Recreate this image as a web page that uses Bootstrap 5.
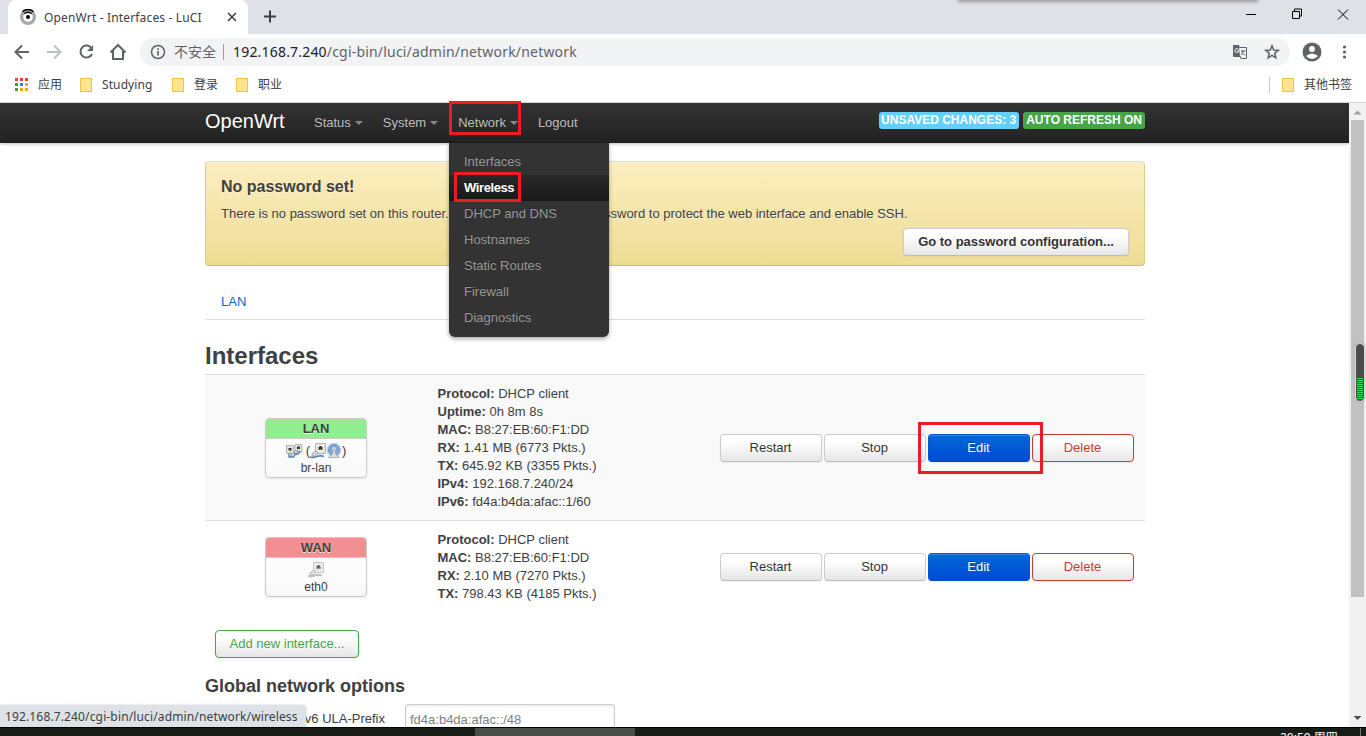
<!DOCTYPE html>
<html lang="zh">
<head>
<meta charset="utf-8">
<title>OpenWrt - Interfaces - LuCI</title>
<link href="https://cdn.jsdelivr.net/npm/bootstrap@5.3.0/dist/css/bootstrap.min.css" rel="stylesheet">
<script src="https://cdn.jsdelivr.net/npm/bootstrap@5.3.0/dist/js/bootstrap.bundle.min.js"></script>
<style>
html,body{height:736px;overflow:hidden}
body{font:13px/18px "Liberation Sans",sans-serif;color:#404040;background:#fff}
svg{display:block;flex:none}
.chrome{font-family:"Noto Sans","Noto Sans CJK SC",sans-serif;color:#3c4043}
.strip{height:34px;background:#dee1e6}
.tab{width:240px;height:34px;margin-left:8px;border-radius:8px 8px 0 0;background:#fff;padding:0 11px 0 12px;font-size:12px}
.tab-title{width:162px;margin-left:8px;letter-spacing:.16px;padding-top:1px}
.topshade{left:958px;top:-4px;width:300px;height:5px;border-radius:2px;background:#aaa;box-shadow:0 0 4px #777}
.toolbar{height:35px;padding-left:14px}
.omni{width:1150px;height:28px;border-radius:14px;background:#f1f3f4;padding:0 10px 0 10px;font-size:14px;color:#5f6368}
.omni b{font-weight:400;color:#202124}
.url{letter-spacing:.19px}
.sep{width:1px;height:16px;background:#9aa0a6}
.marks{height:33px;font-size:12px;padding:0 14px 2px 15px}
.fold{width:12px;height:14px;background:#ffe38f;border:1px solid #e9c643}
.view{height:625px;border-top:1px solid #d4d4d4;overflow:hidden}
.main{width:1349px}
.wrap{width:940px;margin:0 0 0 205px}
.topnav{height:40px;background:linear-gradient(#333,#222);box-shadow:0 1px 3px rgba(0,0,0,.25),inset 0 -1px 0 rgba(0,0,0,.1);text-shadow:0 -1px 0 rgba(0,0,0,.25)}
.brandname{font-size:20px;color:#fff;width:99px;line-height:36px}
.topnav .nav-link{padding:0 10px;line-height:39px;color:#bfbfbf}
.tri:after{content:"";display:inline-block;border:4px solid transparent;border-top-color:#888;border-bottom:0;margin-left:4px;vertical-align:2px}
.menu{top:40px;left:244px;width:160px;height:194px;padding:6px 0;background:#333;border-radius:0 0 6px 6px;box-shadow:0 2px 4px rgba(0,0,0,.35);z-index:3;color:#999}
.menu div{height:26px;line-height:26px;padding-left:15px}
.menu .on{background:linear-gradient(#292929,#191919);color:#fff;font-weight:700;letter-spacing:-.4px}
.tag{height:17px;line-height:16px;border-radius:3px;color:#fff;font-size:12px;font-weight:700;padding:0 3px 0 2px;text-shadow:none}
.tag+.tag{padding:0 3px 0 3px}
.notice{margin-top:18px;height:105px;padding:7px 15px;background:linear-gradient(#fceec1,#eedc94);border:1px solid;border-color:#dfdbcd #dccb85 #bfb9a0;border-radius:4px;box-shadow:inset 0 1px 0 rgba(255,255,255,.25);text-shadow:0 1px 0 rgba(255,255,255,.5)}
.notice h4{font-size:16px;line-height:36px;font-weight:700;margin:0}
.lbtn{display:block;height:28px;border:1px solid #ccc;border-bottom-color:#bbb;border-radius:4px;background:linear-gradient(#fff 25%,#e6e6e6);font-size:13px;line-height:25px;color:#333;padding:0;text-align:center;box-shadow:inset 0 1px 0 rgba(255,255,255,.2),0 1px 2px rgba(0,0,0,.05);text-shadow:0 1px 1px rgba(255,255,255,.75)}
.w102{width:102px;padding-right:1px}
.lbtn.pri{background:linear-gradient(#0069d6,#0049d6);border-color:#0057d6 #0057d6 #0049c0;color:#fff;text-shadow:0 -1px 0 rgba(0,0,0,.25)}
.lbtn.neg{color:#c43c35;border-color:#c43c35}
.lbtn.pos{color:#46a546;border-color:#46a546;width:144px;margin:18px 0 0 10px}
.lantab{height:36px;margin-top:18px;border-bottom:1px solid #ddd;padding-left:16px;line-height:36px;color:#0069d6}
h2.ttl{font-size:24px;line-height:36px;font-weight:700;margin:18px 0 0}
.rowx{border-top:1px solid #ddd;padding:10px 11px 9px 0}
.odd{background:#f9f9f9}
.cellbox{width:222px}
.ifbox{width:102px;height:60px;border:1px solid #ccc;border-radius:4px;background:linear-gradient(#fff,#f9f9f9);box-shadow:0 1px 2px rgba(0,0,0,.08);text-align:center;overflow:hidden;font-size:12px}
.ifhead{height:20px;line-height:19px;border-bottom:1px solid #ccc;font-weight:700;font-size:13px;text-shadow:0 1px 0 rgba(255,255,255,.75)}
.dev{line-height:16px;padding-top:1px}
h3.sub{font-size:18px;line-height:36px;font-weight:700;margin:10px 0 0}
.inp{width:210px;height:28px;border:1px solid #ccc;border-radius:3px;color:#808080;padding:6px 4px;box-shadow:inset 0 1px 3px rgba(0,0,0,.1)}
.sbar{width:17px;height:624px;background:#f1f1f1}
.thumb{width:13px;height:477px;background:#c1c1c1}
.pill{left:1355px;top:343px;width:10px;height:59px;border-radius:5px;background:#4c4c4c;border:1px solid #ddd;box-shadow:0 0 2px #999}
.pill i{display:block;margin:34px 1px 0;height:22px;background:repeating-linear-gradient(#2fd65c 0 1px,#3c5c43 1px 2px)}
.red{border:3px solid #ed1c24;z-index:5}
.r1{left:449px;top:101px;width:72px;height:34px}
.r2{left:454px;top:172px;width:67px;height:30px}
.r3{left:918px;top:422px;width:125px;height:52px}
.bubble{left:0;top:705px;width:306px;height:22px;background:#dee1e6;border-radius:0 4px 0 0;padding-left:5px;line-height:24px;font-size:12px;letter-spacing:.14px;box-shadow:0 0 2px rgba(0,0,0,.25)}
.task{height:9px;background:#181d17;border-top:1px solid #000;overflow:hidden}
.task .act{margin-left:475px;width:160px;background:#484d47}
.clock{margin-left:645px;width:81px;color:#fff;font-size:12px;line-height:18px;border-right:1px solid #777;padding-top:1px}
</style>
</head>
<body>
<svg width="0" height="0" class="position-absolute"><defs>
<g id="plug"><path d="M5.500 .5h10v10h-10z" fill="#e9e9e4" stroke="#b4b4ae"/><path d="M8.500 4h1V3h2v1h1v3h-4z" fill="#333"/><path d="M9.500 6.500h2" stroke="#a6904c"/></g>
</defs></svg>
<div class="chrome">
 <div class="strip d-flex position-relative overflow-hidden">
  <div class="topshade position-absolute"></div>
  <div class="tab d-flex align-items-center">
   <svg width="16" height="16" viewBox="0 0 16 16"><circle cx="8" cy="8" r="8" fill="#a8a8a8"/><circle cx="8" cy="8" r="4.800" fill="#fff"/><circle cx="8" cy="8" r="2" fill="#000"/><path d="M2.500 2.800Q8-2 13.500 2.800M4.300 4.800Q8 1.500 11.700 4.800" fill="none" stroke="#000" stroke-width="1.400"/></svg>
   <span class="tab-title">OpenWrt - Interfaces - LuCI</span>
   <svg class="ms-auto" width="10" height="10"><path d="M1 1l8 8M9 1l-8 8" stroke="#3c4043" stroke-width="1.600"/></svg>
  </div>
  <svg class="ms-3 mt-1" width="13" height="25"><path d="M0 12.500h12M6 6.500v12" stroke="#3c4043" stroke-width="2"/></svg>
  <svg class="ms-auto" width="122" height="34" fill="none" stroke="#000"><path d="M2 14.500h10M48.500 11.500h7v7h-7zM50.500 11v-2h7v7h-2M94 9.500l10 10M104 9.500l-10 10"/></svg>
 </div>
 <div class="toolbar d-flex align-items-center">
  <svg width="126" height="20" fill="none" stroke="#5f6368" stroke-width="2"><path d="M15 10H2M8 3.500L1.500 10 8 16.500"/><path d="M33 10h13M40 3.500l6.500 6.500-6.500 6.500" stroke="#bdc1c6"/><path d="M77.500 6.200A6 6 0 1 0 78 12"/><path d="M79 3v6h-6z" fill="#5f6368" stroke="none"/><path d="M96.500 10.500l7.500-7.500 7.500 7.500M99 9v8h10V9"/></svg>
  <div class="omni d-flex align-items-center">
   <svg width="16" height="16" fill="none" stroke="#5f6368" stroke-width="1.500"><circle cx="8" cy="8" r="6.500"/><path d="M8 7v4.500M8 4.200v1.600" stroke-width="1.700"/></svg>
   <span style="margin-left:8px">不安全</span><i class="sep me-3" style="margin-left:7px;margin-right:9px!important"></i><span class="url"><b>192.168.7.240</b>/cgi-bin/luci/admin/network/network</span>
   <svg class="ms-auto" width="16" height="16"><path d="M1 1h6l2.500 12H2q-1 0-1-1z" fill="#5f6368"/><path d="M7 3.500h7.500v11H9L8 12" fill="#f1f3f4" stroke="#5f6368"/><path d="M6.500 5.500a2 2 0 1 0 .3 1.500H5" fill="none" stroke="#fff"/><path d="M9 7h4.500M11 6v1.500q0 2-2 3.500M10 8.500l3 3" fill="none" stroke="#5f6368"/></svg>
   <svg class="ms-3" width="16" height="16"><path d="M8 1.800l1.700 4.300 4.500.3-3.500 2.900 1.200 4.500L8 11.300l-3.900 2.500 1.200-4.500-3.500-2.900 4.500-.3z" fill="none" stroke="#5f6368" stroke-width="1.500"/></svg>
  </div>
  <svg width="76" height="20"><circle cx="22" cy="10" r="9.500" fill="#5f6368"/><circle cx="22" cy="7" r="2.900" fill="#fff"/><path d="M16 14q6-5 12 0-2.500 3-6 3t-6-3z" fill="#fff"/><g fill="#5f6368"><circle cx="54.500" cy="5" r="1.600"/><circle cx="54.500" cy="10" r="1.600"/><circle cx="54.500" cy="15" r="1.600"/></g></svg>
 </div>
 <div class="marks d-flex align-items-center">
  <svg width="13" height="13"><path d="M0 0h3v3H0zM5 0h3v3H5zM10 0h3v3h-3z" fill="#ea4335"/><path d="M0 5h3v3H0zM0 10h3v3H0z" fill="#34a050"/><path d="M5 5h3v3H5z" fill="#2684fc"/><path d="M10 5h3v3h-3zM5 10h3v3H5zM10 10h3v3h-3z" fill="#f5a800"/></svg>
  <span style="margin-left:10px;width:42px">应用</span>
  <i class="fold"></i><span style="margin-left:10px;width:70px;letter-spacing:.1px">Studying</span>
  <i class="fold"></i><span style="margin-left:10px;width:42px">登录</span>
  <i class="fold"></i><span style="margin-left:10px">职业</span>
  <i class="sep ms-auto" style="opacity:.6;margin-right:12px"></i><i class="fold"></i><span style="margin-left:10px">其他书签</span>
 </div>
</div>
<div class="view d-flex">
 <div class="main">
  <div class="topnav"><div class="wrap d-flex position-relative">
   <div class="brandname">OpenWrt</div>
   <nav class="nav"><a class="nav-link tri">Status</a><a class="nav-link tri">System</a><a class="nav-link tri">Network</a><a class="nav-link">Logout</a></nav>
   <div class="d-flex gap-1 ms-auto" style="padding-top:9px"><span class="tag" style="background:#62cffc">UNSAVED CHANGES: 3</span><span class="tag" style="background:#46a546">AUTO REFRESH ON</span></div>
   <div class="menu position-absolute"><div>Interfaces</div><div class="on">Wireless</div><div>DHCP and DNS</div><div>Hostnames</div><div>Static Routes</div><div>Firewall</div><div>Diagnostics</div></div>
  </div></div>
  <div class="wrap">
   <div class="notice"><h4>No password set!</h4><div>There is no password set on this router. Please configure a root password to protect the web interface and enable SSH.</div><a class="lbtn fw-bold ms-auto text-decoration-none" style="width:226px;margin-top:5px">Go to password configuration...</a></div>
   <div class="lantab">LAN</div>
   <h2 class="ttl">Interfaces</h2>
   <div class="rowx odd d-flex align-items-center">
    <div class="cellbox"><div class="ifbox mx-auto"><div class="ifhead" style="background:#90ee90">LAN</div>
     <div class="d-flex justify-content-center" style="padding-top:4px;height:20px">
      <svg width="17" height="16"><path d="M.5 2.500h7v8h-7zM9 1.500h7v7.500H9z" fill="#e4e4de" stroke="#b2b2ae"/><path d="M2.500 5h3v2.500h-3zM11 3.500h3V6h-3z" fill="#333"/><path d="M2 13q6 3 7-2 4 1 5-3" fill="none" stroke="#6e97c8" stroke-width="2"/><path d="M2 11l3-1 1 2-2 1zM8 9l2-2 2 1-2 3z" fill="#ddd" stroke="#777" stroke-width=".7"/></svg>
      <span style="margin-left:3px;font-size:13px;line-height:15px">(</span>
      <svg width="16" height="16"><use href="#plug"/><path d="M0 14q4 1 7-.5t7 0" fill="none" stroke="#5d8dc7" stroke-width="1.800"/><path d="M2 11l4-3 2 2-3 3-3 .5z" fill="#ddd" stroke="#888" stroke-width=".8"/></svg>
      <svg width="16" height="16"><circle cx="8" cy="7" r="7.500" fill="#bdd1e8"/><circle cx="8" cy="7" r="5.300" fill="#86abd8" stroke="#5a8ac4"/><circle cx="8" cy="6" r="2.500" fill="#d5e2f1" stroke="#5a8ac4" stroke-width=".7"/><path d="M2.500 14.500h11L9.500 11 8.800 6H7.200L6.500 11z" fill="#dedede" stroke="#999" stroke-width=".7"/></svg>
      <span style="font-size:13px;line-height:15px">)</span>
     </div><div class="dev">br-lan</div></div></div>
    <div style="padding-left:10.500px"><div><b>Protocol:</b> DHCP client</div><div><b>Uptime:</b> 0h 8m 8s</div><div><b>MAC:</b> B8:27:EB:60:F1:DD</div><div><b>RX:</b> 1.41 MB (6773 Pkts.)</div><div><b>TX:</b> 645.92 KB (3355 Pkts.)</div><div><b>IPv4:</b> 192.168.7.240/24</div><div><b>IPv6:</b> fd4a:b4da:afac::1/60</div></div>
    <div class="d-flex ms-auto" style="gap:2px"><a class="lbtn w102 text-decoration-none">Restart</a><a class="lbtn w102 text-decoration-none">Stop</a><a class="lbtn pri w102 text-decoration-none">Edit</a><a class="lbtn neg w102 text-decoration-none">Delete</a></div>
   </div>
   <div class="rowx d-flex align-items-center">
    <div class="cellbox"><div class="ifbox mx-auto"><div class="ifhead" style="background:#f09090">WAN</div>
     <div class="d-flex justify-content-center" style="padding-top:4px;height:20px"><svg width="16" height="16" style="filter:grayscale(1);opacity:.75"><use href="#plug"/><path d="M0 14q4 1 7-.5t7 0" fill="none" stroke="#aaa" stroke-width="1.800"/><path d="M2 11l4-3 2 2-3 3-3 .5z" fill="#ddd" stroke="#888" stroke-width=".8"/></svg></div><div class="dev">eth0</div></div></div>
    <div style="padding-left:10.500px"><div><b>Protocol:</b> DHCP client</div><div><b>MAC:</b> B8:27:EB:60:F1:DD</div><div><b>RX:</b> 2.10 MB (7270 Pkts.)</div><div><b>TX:</b> 798.43 KB (4185 Pkts.)</div></div>
    <div class="d-flex ms-auto" style="gap:2px"><a class="lbtn w102 text-decoration-none">Restart</a><a class="lbtn w102 text-decoration-none">Stop</a><a class="lbtn pri w102 text-decoration-none">Edit</a><a class="lbtn neg w102 text-decoration-none">Delete</a></div>
   </div>
   <a class="lbtn pos text-decoration-none">Add new interface...</a>
   <h3 class="sub">Global network options</h3>
   <div class="d-flex"><div class="text-end" style="width:180px;padding-top:6px;margin-right:20px">IPv6 ULA-Prefix</div><div class="inp">fd4a:b4da:afac::/48</div></div>
  </div>
 </div>
 <div class="sbar d-flex flex-column align-items-center">
  <svg width="17" height="17"><path d="M4.500 11.500l4-4 4 4z" fill="#a0a0a0"/></svg>
  <div class="thumb"></div>
  <svg class="mt-auto" width="17" height="17"><path d="M4.500 6l4 4 4-4z" fill="#505050"/></svg>
 </div>
</div>
<div class="task d-flex chrome"><div class="act"></div><div class="clock">20:59 周四</div></div>
<div class="bubble chrome position-absolute">192.168.7.240/cgi-bin/luci/admin/network/wireless</div>
<div class="pill position-absolute"><i></i></div>
<div class="red r1 position-absolute"></div><div class="red r2 position-absolute"></div><div class="red r3 position-absolute"></div>
</body>
</html>
